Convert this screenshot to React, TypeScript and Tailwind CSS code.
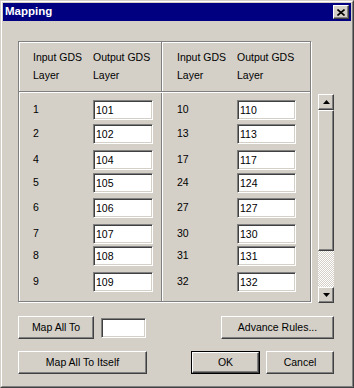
import React from "react";

const raised =
  "bg-[#d4d0c8] border border-t-white border-l-white border-b-[#404040] border-r-[#404040] shadow-[inset_-1px_-1px_0_#808080]";
const sunken =
  "bg-white border border-t-[#808080] border-l-[#808080] border-b-white border-r-white shadow-[inset_1px_1px_0_#404040,inset_-1px_-1px_0_#d4d0c8]";

const left = [
  ["1", "101"],
  ["2", "102"],
  ["4", "104"],
  ["5", "105"],
  ["6", "106"],
  ["7", "107"],
  ["8", "108"],
  ["9", "109"],
];
const right = [
  ["10", "110"],
  ["13", "113"],
  ["17", "117"],
  ["24", "124"],
  ["27", "127"],
  ["30", "130"],
  ["31", "131"],
  ["32", "132"],
];
const mts = ["mt-[7px]", "mt-[4px]", "mt-[6px]", "mt-[3px]", "mt-[5px]", "mt-[6px]", "mt-[2px]", "mt-[6px]"];

function Column({ rows, boxW }: { rows: string[][]; boxW: string }) {
  return (
    <div className="flex flex-col pl-[14px]">
      {rows.map(([a, b], i) => (
        <div key={a} className={`flex items-center h-[20px] ${mts[i]}`}>
          <div className="w-[60px]">{a}</div>
          <div className={`${sunken} ${boxW} h-[20px] pl-[2px] flex items-center leading-none`}>{b}</div>
        </div>
      ))}
    </div>
  );
}

function Header() {
  return (
    <div className="flex pl-[14px] pt-[6px] leading-[18px]">
      <div className="w-[60px]">
        <div>Input GDS</div>
        <div>Layer</div>
      </div>
      <div>
        <div>Output GDS</div>
        <div>Layer</div>
      </div>
    </div>
  );
}

function Arrow({ up }: { up?: boolean }) {
  return (
    <svg width="7" height="4" viewBox="0 0 7 4" className="block">
      {up ? <path d="M3.5 0 L7 4 L0 4 Z" fill="#000" /> : <path d="M0 0 L7 0 L3.5 4 Z" fill="#000" />}
    </svg>
  );
}

export default function App() {
  return (
    <div
      className="w-[354px] h-[388px] bg-[#d4d0c8] border border-t-[#d4d0c8] border-l-[#d4d0c8] border-b-[#404040] border-r-[#404040] text-black text-[10.5px]"
      style={{ fontFamily: '"Liberation Sans", Arial, sans-serif' }}
    >
      <div className="h-full border border-t-white border-l-white border-b-[#808080] border-r-[#808080] p-px flex flex-col">
        {/* Title bar */}
        <div className="h-[18px] bg-[#000080] flex items-center justify-between pl-[2px] pr-[2px]">
          <span className="text-white font-bold text-[11.5px] leading-none">Mapping</span>
          <div className={`${raised} w-[16px] h-[14px] flex items-center justify-center`}>
            <svg width="8" height="7" viewBox="0 0 8 7" className="block">
              <path d="M0.5 0.5 L7.5 6.5 M7.5 0.5 L0.5 6.5" stroke="#000" strokeWidth="1.6" />
            </svg>
          </div>
        </div>

        {/* Content */}
        <div className="flex-1 pl-[15px] pt-[20px]">
          <div className="flex items-start">
            {/* Table frame */}
            <div className="w-[293px] h-[261px] border border-[#808080] shadow-[inset_1px_1px_0_#fff,1px_1px_0_#fff] flex flex-col">
              <div className="h-[49px] flex">
                <div className="w-[142px]">
                  <Header />
                </div>
                <div className="w-[2px] border-l border-[#808080] shadow-[inset_1px_0_0_#fff]" />
                <div className="w-[147px]">
                  <Header />
                </div>
              </div>
              <div className="h-[2px] border-t border-[#808080] bg-white" />
              <div className="flex-1 flex">
                <div className="w-[142px]">
                  <Column rows={left} boxW="w-[60px]" />
                </div>
                <div className="w-[2px] border-l border-[#808080] bg-white" />
                <div className="w-[147px]">
                  <Column rows={right} boxW="w-[59px]" />
                </div>
              </div>
            </div>

            {/* Scrollbar */}
            <div className="ml-[7px] mt-[53px] w-[16px] h-[209px] flex flex-col">
              <div className={`${raised} h-[16px] flex items-center justify-center`}>
                <Arrow up />
              </div>
              <div className={`${raised} h-[141px]`} />
              <div className="h-[36px] bg-[repeating-conic-gradient(#ffffff_0_25%,#d4d0c8_0_50%)] bg-[length:2px_2px]" />
              <div className={`${raised} h-[16px] flex items-center justify-center`}>
                <Arrow />
              </div>
            </div>
          </div>

          {/* Bottom rows */}
          <div className="mt-[13px] w-[316px] flex items-center justify-between">
            <div className="flex items-center">
              <div className={`${raised} w-[76px] h-[23px] flex items-center justify-center`}>Map All To</div>
              <div className={`${sunken} ml-[7px] w-[45px] h-[20px]`} />
            </div>
            <div className={`${raised} w-[113px] h-[23px] flex items-center justify-center`}>Advance Rules...</div>
          </div>
          <div className="mt-[12px] w-[316px] flex items-center justify-between">
            <div className={`${raised} w-[129px] h-[23px] flex items-center justify-center`}>Map All To Itself</div>
            <div className="flex items-center">
              <div className="w-[69px] h-[23px] border border-black">
                <div className={`${raised} w-full h-full flex items-center justify-center`}>OK</div>
              </div>
              <div className={`${raised} ml-[6px] w-[68px] h-[23px] flex items-center justify-center`}>Cancel</div>
            </div>
          </div>
        </div>
      </div>
    </div>
  );
}
